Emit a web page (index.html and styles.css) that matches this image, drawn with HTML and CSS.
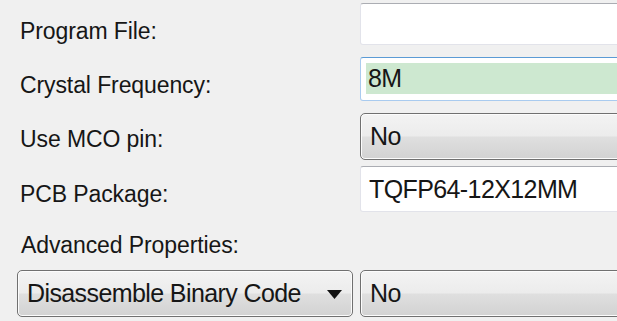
FILE: index.html
```
<!DOCTYPE html>
<html lang="en">
<head>
    <meta charset="UTF-8">
    <meta name="viewport" content="width=device-width, initial-scale=1.0">
    <title>Project Properties</title>
    <link rel="stylesheet" href="styles.css">
</head>
<body>
    <div class="panel">
        <div class="props">
            <label class="caption caption-file">Program File:</label>
            <div class="text-box box-file"></div>

            <label class="caption caption-crystal">Crystal Frequency:</label>
            <div class="text-box box-crystal focused">
                <div class="valid-fill">8M</div>
            </div>

            <label class="caption caption-mco">Use MCO pin:</label>
            <div class="combo box-mco">No</div>

            <label class="caption caption-pcb">PCB Package:</label>
            <div class="text-box box-pcb">TQFP64-12X12MM</div>
        </div>

        <div class="caption advanced-title">Advanced Properties:</div>
        <div class="advanced-row">
            <div class="combo combo-name">
                <span>Disassemble Binary Code</span>
                <svg class="arrow" width="15" height="9" viewBox="0 0 15 9">
                    <polygon points="0,0 15,0 7.5,9" fill="#111"/>
                </svg>
            </div>
            <div class="combo combo-value">No</div>
        </div>
    </div>
</body>
</html>
```

FILE: styles.css
```
body {
    margin: 0;
    background-color: #f0f0f0;
    font-family: "Liberation Sans", Arial, sans-serif;
    color: #161616;
}
.panel {
    width: 617px;
    height: 321px;
    overflow: hidden;
    padding-top: 3px;
    box-sizing: border-box;
}
.props {
    display: grid;
    grid-template-columns: 360px 300px;
    align-items: start;
}
.caption {
    font-size: 23px;
    line-height: 26px;
    padding-left: 20px;
    letter-spacing: -0.1px;
}
.props .caption {
    padding-top: 15px;
}
.props .caption-mco {
    padding-top: 13px;
}
.text-box {
    box-sizing: border-box;
    background-color: #fff;
    border: 1px solid #e2e3ea;
    border-top-color: #abadb3;
    border-radius: 3px;
    font-size: 25px;
    letter-spacing: -0.6px;
    padding-left: 8px;
    display: flex;
    align-items: center;
}
.box-file {
    height: 42px;
    margin-bottom: 12px;
}
.box-crystal {
    height: 44px;
    margin-bottom: 12px;
    padding: 5px 0 6px 5px;
    align-items: stretch;
}
.focused {
    border-color: #a9cbef;
    border-top-color: #5b9bd5;
}
.valid-fill {
    flex: 1;
    background-color: #cde8d0;
    padding-left: 2px;
    display: flex;
    align-items: center;
}
.box-pcb {
    height: 46px;
}
.combo {
    box-sizing: border-box;
    height: 47px;
    border: 1px solid #707070;
    border-radius: 5px;
    background: linear-gradient(#f3f3f3 0%, #ececec 48%, #dfdfdf 52%, #d2d2d2 100%);
    box-shadow: inset 0 0 0 1px #fcfcfc;
    font-size: 25px;
    letter-spacing: -0.6px;
    padding-left: 9px;
    display: flex;
    align-items: center;
}
.box-mco {
    margin-bottom: 6px;
}
.advanced-title {
    margin-top: 20px;
    padding-left: 21px;
}
.advanced-row {
    display: flex;
    gap: 7px;
    padding-left: 17px;
    margin-top: 12px;
}
.combo-name {
    width: 336px;
    flex-shrink: 0;
    justify-content: space-between;
    padding-right: 10px;
}
.combo-name .arrow {
    margin-top: 2px;
}
.combo-value {
    width: 300px;
    flex-shrink: 0;
}
```
